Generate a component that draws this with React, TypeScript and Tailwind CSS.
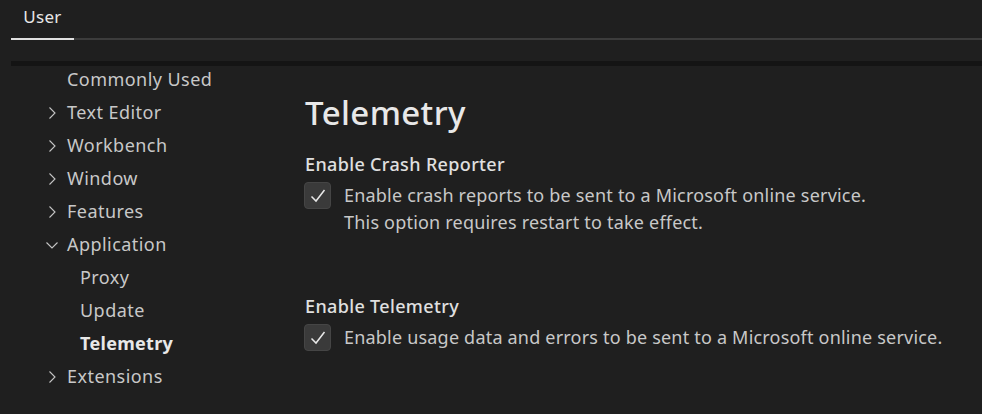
import React from "react";

const font = { fontFamily: '"Noto Sans", "Open Sans", sans-serif' };

function Chevron({ open }: { open?: boolean }) {
  return (
    <svg width="16" height="16" viewBox="0 0 16 16" className="shrink-0">
      {open ? (
        <path d="M2.5 5.5 L8 11 L13.5 5.5" fill="none" stroke="#c5c5c5" strokeWidth="1.1" />
      ) : (
        <path d="M5.5 2.5 L11 8 L5.5 13.5" fill="none" stroke="#c5c5c5" strokeWidth="1.1" />
      )}
    </svg>
  );
}

function TreeItem({ label, chevron, open, indent, bold }: { label: string; chevron?: boolean; open?: boolean; indent?: boolean; bold?: boolean }) {
  return (
    <div className="flex h-[33px] items-center">
      <div className="w-[44px] shrink-0" />
      <div className="w-[23px] shrink-0 flex items-center">{chevron ? <Chevron open={open} /> : null}</div>
      {indent ? <div className="w-[13px] shrink-0" /> : null}
      <span
        className={
          bold
            ? "text-[18px] font-bold tracking-[0.3px] text-[#e8e8e8]"
            : "text-[18px] tracking-[0.45px] text-[#c8c8c8]"
        }
      >
        {label}
      </span>
    </div>
  );
}

function Check() {
  return (
    <div className="w-[27px] h-[27px] rounded-[4px] bg-[#3a3a3a] border border-[#454545] flex items-center justify-center shrink-0">
      <svg width="20" height="20" viewBox="0 0 20 20">
        <path d="M3.5 10.5 L8 15 L16.5 4" fill="none" stroke="#e8e8e8" strokeWidth="1.5" />
      </svg>
    </div>
  );
}

export default function App() {
  return (
    <div className="w-[982px] h-[414px] bg-[#1f1f1f] overflow-hidden" style={font}>
      <div className="h-[38px] px-[11px] flex items-end">
        <div className="w-[63px] h-[38px] flex items-start justify-center pt-[4px]">
          <span className="text-[17px] tracking-[0.3px] text-[#e8e8e8]">User</span>
        </div>
      </div>
      <div className="ml-[11px] flex h-[2px]">
        <div className="w-[63px] bg-[#e0e0e0]" />
        <div className="flex-1 bg-[#3c3c3c]" />
      </div>
      <div className="h-[21px]" />
      <div className="ml-[11px] h-[5px] bg-[#141414]" />
      <div className="flex">
        <div className="w-[294px] shrink-0 -mt-[3px]">
          <TreeItem label="Commonly Used" />
          <TreeItem label="Text Editor" chevron />
          <TreeItem label="Workbench" chevron />
          <TreeItem label="Window" chevron />
          <TreeItem label="Features" chevron />
          <TreeItem label="Application" chevron open />
          <TreeItem label="Proxy" indent />
          <TreeItem label="Update" indent />
          <TreeItem label="Telemetry" indent bold />
          <TreeItem label="Extensions" chevron />
        </div>
        <div className="flex-1 pl-[11px] pt-[26px]">
          <div className="text-[33px] leading-[42px] tracking-[0.4px] text-[#e8e8e8] font-medium">Telemetry</div>
          <div className="mt-[18px] text-[18px] leading-[24px] tracking-[0.35px] text-[#e0e0e0] font-medium">Enable Crash Reporter</div>
          <div className="mt-[6px] flex gap-[13px] -ml-[1px]">
            <Check />
            <div className="text-[18px] leading-[27px] tracking-[0.2px] text-[#c8c8c8]">
              <div>Enable crash reports to be sent to a Microsoft online service.</div>
              <div>This option requires restart to take effect.</div>
            </div>
          </div>
          <div className="mt-[58px] text-[18px] leading-[24px] tracking-[0.35px] text-[#e0e0e0] font-medium">Enable Telemetry</div>
          <div className="mt-[6px] flex gap-[13px] -ml-[1px]">
            <Check />
            <div className="text-[18px] leading-[27px] tracking-[0.2px] text-[#c8c8c8]">Enable usage data and errors to be sent to a Microsoft online service.</div>
          </div>
        </div>
      </div>
    </div>
  );
}
